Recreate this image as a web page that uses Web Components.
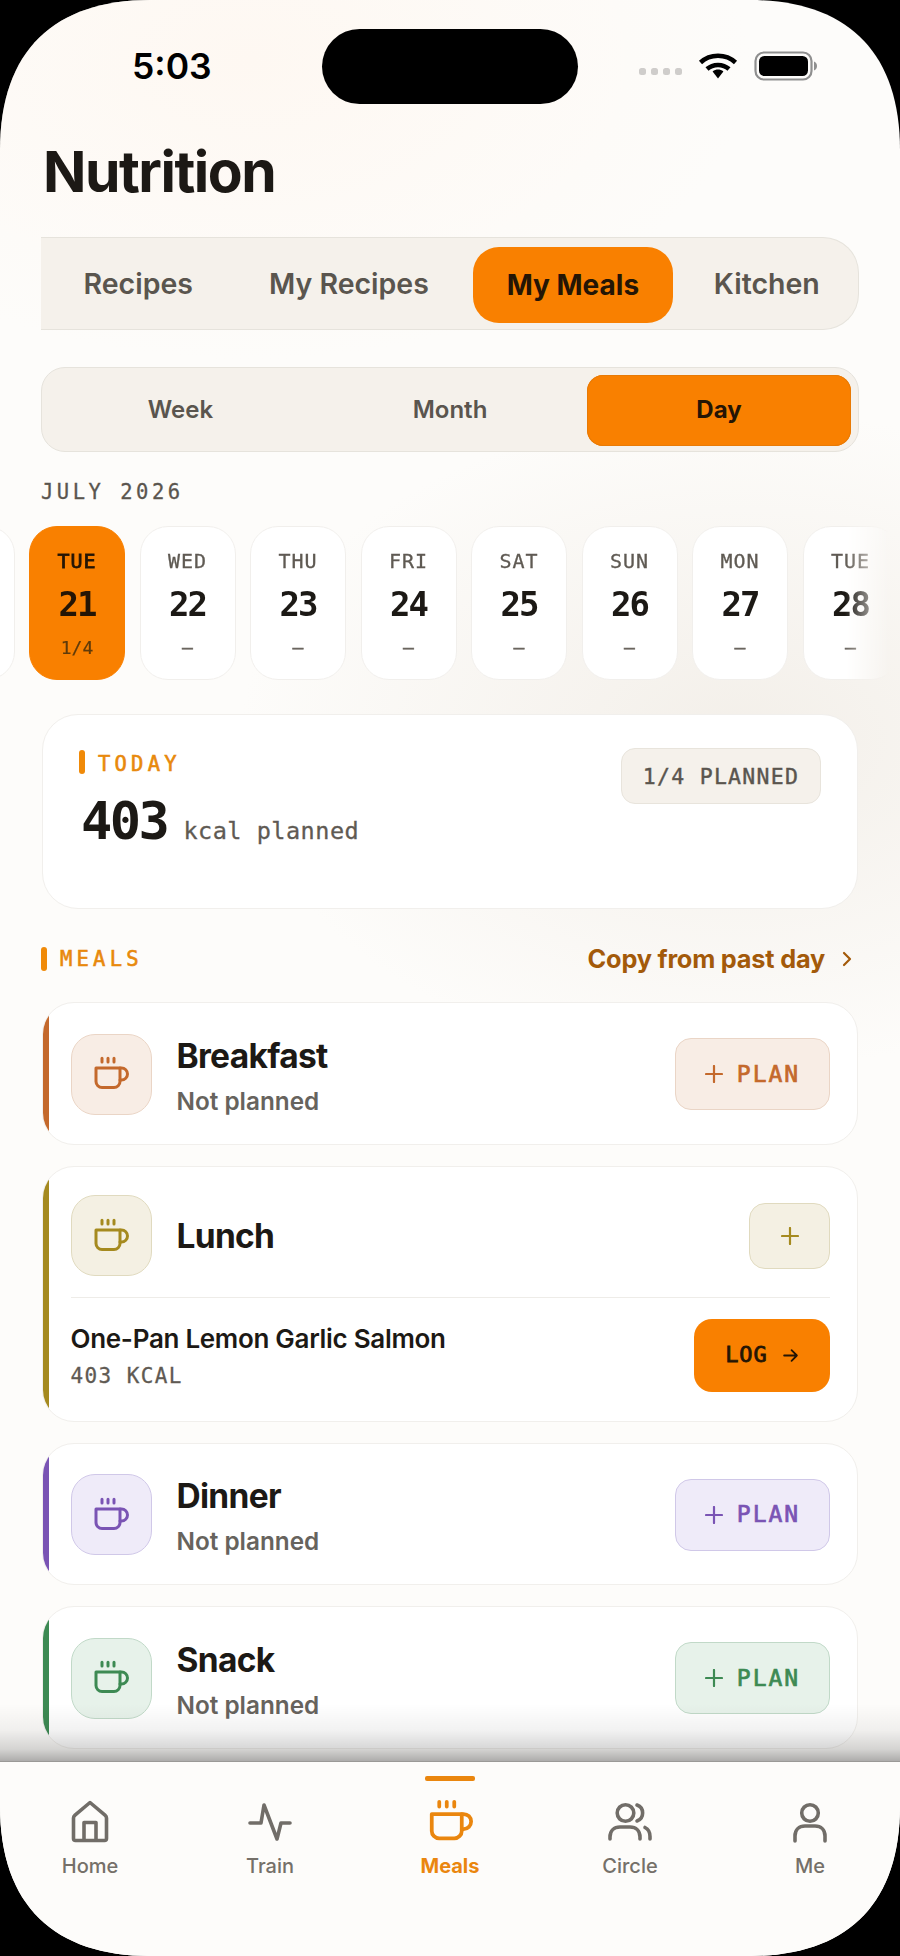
<!DOCTYPE html>
<html>
<head>
<meta charset="utf-8">
<style>
  html, body { margin: 0; padding: 0; background: #000; }
  body { width: 900px; height: 1956px; overflow: hidden; font-family: Inter, sans-serif; }
</style>
</head>
<body>
<nutrition-screen>
  <status-bar time="5:03"></status-bar>
  <page-title>Nutrition</page-title>
  <main-tabs>
    <tab-item>Recipes</tab-item>
    <tab-item>My Recipes</tab-item>
    <tab-item active>My Meals</tab-item>
    <tab-item>Kitchen</tab-item>
  </main-tabs>
  <range-switch>
    <range-item>Week</range-item>
    <range-item>Month</range-item>
    <range-item active>Day</range-item>
  </range-switch>
  <month-label>JULY 2026</month-label>
  <day-strip>
    <day-card></day-card>
    <day-card day="TUE" num="21" note="1/4" active></day-card>
    <day-card day="WED" num="22" note="–"></day-card>
    <day-card day="THU" num="23" note="–"></day-card>
    <day-card day="FRI" num="24" note="–"></day-card>
    <day-card day="SAT" num="25" note="–"></day-card>
    <day-card day="SUN" num="26" note="–"></day-card>
    <day-card day="MON" num="27" note="–"></day-card>
    <day-card day="TUE" num="28" note="–"></day-card>
  </day-strip>
  <today-card kcal="403" badge="1/4 PLANNED"></today-card>
  <section-head>MEALS</section-head>
  <meal-card style="--tone:#c4692c;--tint:#f8ede5;--edge:#ead5c6">
    <span slot="name">Breakfast</span>
    <span slot="sub">Not planned</span>
    <plan-button slot="action" label="PLAN"></plan-button>
  </meal-card>
  <meal-card style="--tone:#a58a1f;--tint:#f4f0e3;--edge:#e0dabf;--text-top:0px;--pad-top:28.5px">
    <span slot="name">Lunch</span>
    <plan-button slot="action"></plan-button>
    <meal-entry slot="entry" title="One-Pan Lemon Garlic Salmon" kcal="403 KCAL"></meal-entry>
  </meal-card>
  <meal-card style="--tone:#7a54b4;--tint:#efebf9;--edge:#d0c8e8">
    <span slot="name">Dinner</span>
    <span slot="sub">Not planned</span>
    <plan-button slot="action" label="PLAN"></plan-button>
  </meal-card>
  <meal-card style="--tone:#3d8a53;--tint:#e7f2ea;--edge:#c1d9c8">
    <span slot="name">Snack</span>
    <span slot="sub">Not planned</span>
    <plan-button slot="action" label="PLAN"></plan-button>
  </meal-card>
  <bottom-nav slot="nav"></bottom-nav>
</nutrition-screen>

<script>
const MONO = `"DejaVu Sans Mono", "Liberation Mono", monospace`;
const CUP = `<path d="M18 8h1a4 4 0 1 1 0 8h-1"/><path d="M2 8h16v9a4 4 0 0 1-4 4H6a4 4 0 0 1-4-4V8z"/><path d="M6 1.500v2.500M10 1.500v2.500M14 1.500v2.500"/>`;

function define(name, html, setup) {
  customElements.define(name, class extends HTMLElement {
    constructor() {
      super();
      this.attachShadow({ mode: 'open' });
      this.shadowRoot.innerHTML = typeof html === 'function' ? '' : html;
    }
    connectedCallback() {
      if (typeof html === 'function') this.shadowRoot.innerHTML = html(this);
      if (setup) setup(this);
    }
  });
}

define('nutrition-screen', `
  <style>
    :host {
      display: flex; flex-direction: column; position: relative;
      width: 900px; height: 1956px; overflow: hidden; box-sizing: border-box;
      color: #1c1915;
      background:
        radial-gradient(500px 330px at 740px 740px, #f3efe9 0%, rgba(243,239,233,0) 100%),
        radial-gradient(500px 300px at 250px 60px, #fef8f2 0%, rgba(254,248,242,0) 100%),
        #fdfcfa;
      clip-path: path('M150 0H750C845 0 900 50 900 150V1806C900 1906 845 1956 750 1956H150C55 1956 0 1906 0 1806V150C0 50 55 0 150 0Z');
    }
    .content { flex: 1; min-height: 0; overflow: hidden; padding: 0 41px; display: flex; flex-direction: column; }
  </style>
  <div class="content"><slot></slot></div>
  <slot name="nav"></slot>
`);

define('status-bar', el => `
  <style>
    :host { display: flex; align-items: center; height: 132px; margin: 0 -41px; padding: 0 62px 0 132px; box-sizing: border-box; }
    .time { font: 600 35.500px/1 Inter, sans-serif; color: #000; width: 190px; margin-top: 2px; }
    .island { width: 256px; height: 75px; border-radius: 38px; background: #000; }
    .right { display: flex; align-items: center; margin-left: 61px; }
    .dots { display: flex; gap: 5px; margin-top: 10px; }
    .dots i { width: 7px; height: 7px; border-radius: 2.5px; background: #cfcdcb; }
    svg { display: block; }
    .wifi { margin-left: 16px; }
    .batt { margin-left: 16px; }
  </style>
  <div class="time">${el.getAttribute('time')}</div>
  <div class="island"></div>
  <div class="right">
    <div class="dots"><i></i><i></i><i></i><i></i></div>
    <svg class="wifi" width="40" height="30" viewBox="0 0 40 30" fill="none" stroke="#000" stroke-width="4.5">
      <path d="M2.5 11.5C12 2.5 28 2.5 37.5 11.5"/>
      <path d="M9 18C15 12.5 25 12.5 31 18"/>
      <path d="M14.6 20.4L20 27.5l5.4-7.1C22 18 18 18 14.6 20.4z" fill="#000" stroke="none"/>
    </svg>
    <svg class="batt" width="63" height="30" viewBox="0 0 63 30">
      <rect x="1.5" y="1.5" width="56" height="27" rx="8.5" fill="none" stroke="#8f8f8f" stroke-width="2.2"/>
      <rect x="5" y="5" width="49" height="20" rx="5.5" fill="#000"/>
      <path d="M60 10.5c2 .6 3 2.400 3 4.500s-1 3.900-3 4.500z" fill="#8f8f8f"/>
    </svg>
  </div>
`);

define('page-title', `
  <style>:host { display: block; font: 700 57px/64px Inter, sans-serif; letter-spacing: -1.5px; color: #1c1915; margin: 8px 0 33px 2px; }</style>
  <slot></slot>
`);

define('main-tabs', `
  <style>
    :host { display: flex; align-items: center; gap: 12px; height: 93px; box-sizing: border-box; background: #f5f1eb; border: 1.5px solid #e6e3dc; border-left: 0; border-radius: 0 36px 36px 0; padding: 2px 0 0 10.5px; }
  </style>
  <slot></slot>
`);

define('tab-item', `
  <style>
    :host { display: flex; align-items: center; justify-content: center; height: 76px; box-sizing: border-box; padding: 0 32px; border-radius: 26px; font: 600 28.500px/1 Inter, sans-serif; color: #5a554e; white-space: nowrap; }
    :host(:last-child) { margin-left: -3px; }
    :host([active]) { background: #f98000; color: #241505; font-weight: 700; font-size: 28px; width: 200px; padding: 0; }
  </style>
  <slot></slot>
`);

define('range-switch', `
  <style>
    :host { display: grid; grid-template-columns: 271px 268px 267px; align-items: center; height: 85px; margin-top: 37px; padding: 1px 6px 0 3px; box-sizing: border-box; background: #f5f1eb; border: 1.5px solid #e6e3dc; border-radius: 24px; }
  </style>
  <slot></slot>
`);

define('range-item', `
  <style>
    :host { display: flex; align-items: center; justify-content: center; height: 71px; border-radius: 16px; font: 600 24px/1 Inter, sans-serif; color: #5a554e; }
    :host([active]) { margin-left: 3px; background: #f98000; color: #241505; font-weight: 700; box-shadow: inset 0 0 0 1px #e87a05; }
  </style>
  <slot></slot>
`);

define('month-label', `
  <style>:host { display: block; font: 400 20.5px/24px ${MONO}; -webkit-text-stroke: .3px currentColor; letter-spacing: 3.500px; color: #5a554e; margin-top: 28px; }</style>
  <slot></slot>
`);

define('day-strip', `
  <style>
    :host { display: flex; gap: 14.5px; margin: 21px -41px 0; height: 156px; overflow: hidden;
      -webkit-mask-image: linear-gradient(90deg, #000 0, #000 845px, transparent 890px); mask-image: linear-gradient(90deg, #000 0, #000 845px, transparent 890px); }
    ::slotted(day-card:first-child) { margin-left: -81.5px; }
  </style>
  <slot></slot>
`);

define('day-card', el => `
  <style>
    :host { flex: none; display: flex; flex-direction: column; align-items: center; width: 96px; height: 154px; box-sizing: border-box; margin-top: 1px; background: #fff; border: 1.5px solid #f1efec; border-radius: 28px; color: #1c1915; font-family: ${MONO}; }
    :host([active]) { background: #f98000; border-color: #f98000; }
    .d { font-size: 20px; line-height: 24px; margin-top: 22px; letter-spacing: 1px; color: #5f5a53; -webkit-text-stroke: .3px currentColor; }
    .n { font-size: 34px; line-height: 40px; font-weight: 700; margin-top: 11px; letter-spacing: -2px; }
    .s { font-size: 18px; line-height: 22px; margin-top: 13px; color: #6b665f; -webkit-text-stroke: .5px currentColor; }
    :host([active]) .d { color: #241505; -webkit-text-stroke: .8px currentColor; }
    :host([active]) .n { color: #241505; }
    :host([active]) .s { color: #5e3a0a; -webkit-text-stroke: .2px currentColor; }
  </style>
  <div class="d">${el.getAttribute('day') || ''}</div>
  <div class="n">${el.getAttribute('num') || ''}</div>
  <div class="s">${el.getAttribute('note') || ''}</div>
`);

define('today-card', el => `
  <style>
    :host { display: flex; justify-content: space-between; align-items: flex-start; height: 195px; box-sizing: border-box; margin: 33px 1px 0; padding: 33px 36px 0 36px; background: #fff; border: 1.5px solid #f1efec; border-radius: 36px; font-family: ${MONO}; }
    .label { display: flex; align-items: center; gap: 13px; font-size: 20.5px; line-height: 24px; letter-spacing: 4.200px; color: #e8890c; -webkit-text-stroke: .6px currentColor; margin-top: 4px; }
    .label i { width: 6px; height: 24px; border-radius: 3px; background: #f08a08; margin-top: -4px; }
    .row { display: flex; align-items: baseline; margin-top: 17px; margin-left: 2px; }
    .num { font-size: 52px; line-height: 56px; font-weight: 700; color: #1c1915; letter-spacing: -2.500px; }
    .unit { font-size: 23.500px; color: #5f5a53; margin-left: 16px; letter-spacing: 0.500px; -webkit-text-stroke: .3px currentColor; }
    .badge { width: 200px; height: 56px; display: flex; align-items: center; justify-content: center; box-sizing: border-box; background: #f5f1eb; border: 1.5px solid #e8e4dc; border-radius: 14px; font-size: 21.500px; letter-spacing: 1.300px; color: #5a554e; -webkit-text-stroke: .4px currentColor; }
  </style>
  <div>
    <div class="label"><i></i>TODAY</div>
    <div class="row"><span class="num">${el.getAttribute('kcal')}</span><span class="unit">kcal planned</span></div>
  </div>
  <div class="badge">${el.getAttribute('badge')}</div>
`);

define('section-head', `
  <style>
    :host { display: flex; align-items: center; justify-content: space-between; margin: 37px 0 9px; height: 26px; }
    .label { display: flex; align-items: center; gap: 13px; font: 400 20.5px/24px ${MONO}; letter-spacing: 4.200px; color: #e8890c; -webkit-text-stroke: .6px currentColor; }
    .label i { width: 6px; height: 24px; border-radius: 3px; background: #f08a08; }
    .copy { display: flex; align-items: center; gap: 16px; font: 700 25.300px/1 Inter, sans-serif; letter-spacing: -0.200px; color: #a35a0a; margin-right: 6px; }
    svg { display: block; }
  </style>
  <div class="label"><i></i><slot></slot></div>
  <div class="copy">Copy from past day
    <svg width="12" height="18" viewBox="0 0 12 18" fill="none" stroke="#a35a0a" stroke-width="2.2" stroke-linecap="round" stroke-linejoin="round"><path d="M3 3l6 6-6 6"/></svg>
  </div>
`);

define('meal-card', `
  <style>
    :host { display: block; position: relative; overflow: hidden; margin: 21px 1px 0; box-sizing: border-box; background: #fff; border: 1.5px solid #f1efec; border-radius: 32px; padding: var(--pad-top, 30.5px) 27px 29px 27.500px; flex: none; }
    .accent { position: absolute; left: -1.5px; top: -1.5px; bottom: -1.5px; width: 7px; background: var(--tone); }
    .head { display: flex; align-items: center; }
    .tile { flex: none; width: 81px; height: 81px; box-sizing: border-box; border-radius: 24px; background: var(--tint); border: 1.5px solid var(--edge); display: flex; align-items: center; justify-content: center; }
    svg { display: block; }
    .text { flex: 1; margin-left: 25px; padding-top: var(--text-top, 3px); }
    ::slotted([slot=name]) { display: block; font: 700 33.500px/38px Inter, sans-serif; letter-spacing: -0.700px; color: #1c1915; }
    ::slotted([slot=sub]) { display: block; font: 600 24.300px/27px Inter, sans-serif; color: #67635d; margin-top: 13px; }
  </style>
  <div class="accent"></div>
  <div class="head">
    <div class="tile"><svg width="36" height="36" viewBox="0 0 24 24" fill="none" stroke="var(--tone)" stroke-width="2" stroke-linecap="round" stroke-linejoin="round">${CUP}</svg></div>
    <div class="text"><slot name="name"></slot><slot name="sub"></slot></div>
    <slot name="action"></slot>
  </div>
  <slot name="entry"></slot>
`);

define('plan-button', el => {
  const label = el.getAttribute('label');
  return `
  <style>
    :host { display: flex; align-items: center; justify-content: center; gap: 14px; height: ${label ? 72 : 66}px; width: ${label ? 155 : 81}px; box-sizing: border-box; background: var(--tint); border: 1.5px solid var(--edge); border-radius: 16px; color: var(--tone); font: 400 23px/1 ${MONO}; letter-spacing: 2px; -webkit-text-stroke: .7px currentColor; }
    svg { display: block; flex: none; }
  </style>
  <svg width="18" height="18" viewBox="0 0 18 18" fill="none" stroke="var(--tone)" stroke-width="2.200" stroke-linecap="round"><path d="M9 1v16M1 9h16"/></svg>
  ${label ? `<span>${label}</span>` : ''}`;
});

define('meal-entry', el => `
  <style>
    :host { display: flex; align-items: center; justify-content: space-between; margin-top: 20.500px; padding-top: 21px; border-top: 1.5px solid #eeece8; }
    .t { font: 600 26px/32px Inter, sans-serif; color: #1c1915; letter-spacing: -0.300px; }
    .k { font: 400 21px/24px ${MONO}; letter-spacing: 1.400px; color: #5f5a53; margin-top: 9px; -webkit-text-stroke: .3px currentColor; }
    .log { display: flex; align-items: center; justify-content: center; gap: 14px; width: 136px; height: 73px; border-radius: 18px; background: #f98000; color: #241505; font: 400 22px/1 ${MONO}; letter-spacing: 1px; -webkit-text-stroke: .8px currentColor; }
    svg { display: block; }
  </style>
  <div><div class="t">${el.getAttribute('title')}</div><div class="k">${el.getAttribute('kcal')}</div></div>
  <div class="log">LOG<svg width="17" height="17" viewBox="0 0 16 16" fill="none" stroke="#241505" stroke-width="1.700" stroke-linecap="round" stroke-linejoin="round"><path d="M2 8h12M9 3l5 5-5 5"/></svg></div>
`);

const NAV_ICONS = {
  home: `<path d="M7.500 20Q7.500 18.500 9 17.200L24 4.500 39 17.200Q40.500 18.500 40.500 20V40.500Q40.500 42.500 38.500 42.500H9.500Q7.500 42.500 7.500 40.500Z"/><path d="M18 42V24.500h12V42"/>`,
  train: `<path d="M4 25h11l3-18 13 34 4-16h9"/>`,
  circle: `<circle cx="19.500" cy="15" r="8.300"/><path d="M31 7a8.500 8.500 0 0 1 0 16"/><path d="M4 41v-2c0-6 4-10 10-10h10c6 0 10 4 10 10v2"/><path d="M39 29.500c3 1.500 5 5 5 9v2.500"/>`,
  me: `<circle cx="24" cy="15" r="8.300"/><path d="M9 43v-5c0-6 4-10 10-10h10c6 0 10 4 10 10v5"/>`
};

define('bottom-nav', `
  <style>
    :host { display: grid; grid-template-columns: repeat(5, 180px); height: 195px; flex: none; position: relative; background: #fdfcfa; border-top: 1px solid #e4e2de; box-sizing: border-box; }
    .fade { position: absolute; left: 0; right: 0; bottom: 100%; height: 58px; pointer-events: none; background: linear-gradient(180deg, rgba(0,0,0,0) 0%, rgba(0,0,0,.05) 45%, rgba(0,0,0,.16) 78%, rgba(0,0,0,.33) 100%); }
  </style>
  <div class="fade"></div>
  <nav-item label="Home" icon="home"></nav-item>
  <nav-item label="Train" icon="train"></nav-item>
  <nav-item label="Meals" icon="meals" active></nav-item>
  <nav-item label="Circle" icon="circle"></nav-item>
  <nav-item label="Me" icon="me"></nav-item>
`);

define('nav-item', el => {
  const active = el.hasAttribute('active');
  const icon = el.getAttribute('icon');
  const svg = icon === 'meals'
    ? `<svg width="45" height="45" style="margin:1px 1.5px 2px" viewBox="0 0 24 24" fill="none" stroke="#ea860e" stroke-width="2" stroke-linecap="round" stroke-linejoin="round">${CUP}</svg>`
    : `<svg width="48" height="48" viewBox="0 0 48 48" fill="none" stroke="#716d68" stroke-width="3.600" stroke-linecap="round" stroke-linejoin="round">${NAV_ICONS[icon]}</svg>`;
  return `
  <style>
    :host { display: flex; flex-direction: column; align-items: center; position: relative; padding-top: 36px; font: 500 20px/24px Inter, sans-serif; color: #757069; }
    :host([active]) { color: #ea860e; font-weight: 700; }
    .bar { position: absolute; top: 14px; left: 65px; width: 50px; height: 5px; border-radius: 2px; background: #ea860e; }
    svg { display: block; }
    .l { margin-top: 8px; }
  </style>
  ${active ? '<div class="bar"></div>' : ''}
  ${svg}
  <div class="l">${el.getAttribute('label')}</div>`;
});
</script>
</body>
</html>
